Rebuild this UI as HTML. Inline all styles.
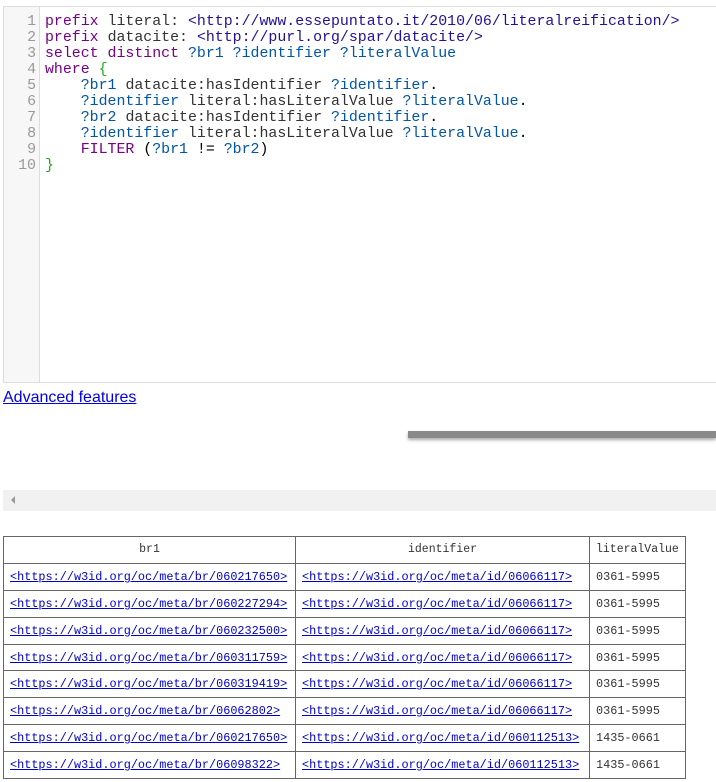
<!DOCTYPE html>
<html><head><style>
body{margin:0;width:716px;height:782px;overflow:hidden;background:#fff;font-family:"Liberation Sans",sans-serif;position:relative}
.ed{position:absolute;left:3px;top:6px;width:713px;height:377px;border:1px solid #ddd;border-right:none;box-sizing:border-box}
.gut{position:absolute;left:0;top:0;width:35px;height:100%;background:#f7f7f7;border-right:1px solid #ddd}
.code{position:absolute;left:0;top:7px;font-family:"Liberation Mono",monospace;font-size:14.9px;line-height:16px;white-space:pre}
.ln{display:inline-block;width:32px;text-align:right;color:#999;margin-right:9px}
.k{color:#708}.v{color:#05a}.u{color:#219}.p{color:#2a2}.o{color:#333}
a.adv{position:absolute;left:3px;top:389px;font-size:16px;color:#00e}
.bar{position:absolute;left:408px;top:431px;width:308px;height:7px;background:#8a8a8a;box-shadow:0 2px 3px #aaa}
.sb{position:absolute;left:3px;top:490px;width:713px;height:21px;background:#f1f1f1}
.sb i{position:absolute;left:8px;top:6px;border:4px solid transparent;border-right:4px solid #999;border-left:0;height:0}
table{position:absolute;left:3px;top:536px;border-collapse:collapse;font-family:"Liberation Mono",monospace;font-size:11.85px}
td,th{border:1px solid #666;height:25.9px;padding:0 6px;white-space:nowrap}
th{font-weight:normal;color:#333;font-size:11.5px}
td{color:#333}td a{color:#00c}
</style></head><body>
<div class="ed"><div class="gut"></div><div class="code"><span class="ln">1</span><span class="k">prefix</span> <span class="o">literal:</span> <span class="u">&lt;http://www.essepuntato.it/2010/06/literalreification/&gt;</span>
<span class="ln">2</span><span class="k">prefix</span> <span class="o">datacite:</span> <span class="u">&lt;http://purl.org/spar/datacite/&gt;</span>
<span class="ln">3</span><span class="k">select distinct</span> <span class="v">?br1 ?identifier ?literalValue</span>
<span class="ln">4</span><span class="k">where</span> <span class="p">{</span>
<span class="ln">5</span>    <span class="v">?br1</span> <span class="o">datacite:hasIdentifier</span> <span class="v">?identifier</span>.
<span class="ln">6</span>    <span class="v">?identifier</span> <span class="o">literal:hasLiteralValue</span> <span class="v">?literalValue</span>.
<span class="ln">7</span>    <span class="v">?br2</span> <span class="o">datacite:hasIdentifier</span> <span class="v">?identifier</span>.
<span class="ln">8</span>    <span class="v">?identifier</span> <span class="o">literal:hasLiteralValue</span> <span class="v">?literalValue</span>.
<span class="ln">9</span>    <span class="k">FILTER</span> (<span class="v">?br1</span> != <span class="v">?br2</span>)
<span class="ln">10</span><span class="p">}</span></div></div>
<a class="adv" href="#">Advanced features</a>
<div class="bar"></div>
<div class="sb"><i></i></div>
<table>
<tr><th style="width:279px">br1</th><th style="width:281px">identifier</th><th>literalValue</th></tr>
<tr><td><a href="#">&lt;https://w3id.org/oc/meta/br/060217650&gt;</a></td><td><a href="#">&lt;https://w3id.org/oc/meta/id/06066117&gt;</a></td><td>0361-5995</td></tr>
<tr><td><a href="#">&lt;https://w3id.org/oc/meta/br/060227294&gt;</a></td><td><a href="#">&lt;https://w3id.org/oc/meta/id/06066117&gt;</a></td><td>0361-5995</td></tr>
<tr><td><a href="#">&lt;https://w3id.org/oc/meta/br/060232500&gt;</a></td><td><a href="#">&lt;https://w3id.org/oc/meta/id/06066117&gt;</a></td><td>0361-5995</td></tr>
<tr><td><a href="#">&lt;https://w3id.org/oc/meta/br/060311759&gt;</a></td><td><a href="#">&lt;https://w3id.org/oc/meta/id/06066117&gt;</a></td><td>0361-5995</td></tr>
<tr><td><a href="#">&lt;https://w3id.org/oc/meta/br/060319419&gt;</a></td><td><a href="#">&lt;https://w3id.org/oc/meta/id/06066117&gt;</a></td><td>0361-5995</td></tr>
<tr><td><a href="#">&lt;https://w3id.org/oc/meta/br/06062802&gt;</a></td><td><a href="#">&lt;https://w3id.org/oc/meta/id/06066117&gt;</a></td><td>0361-5995</td></tr>
<tr><td><a href="#">&lt;https://w3id.org/oc/meta/br/060217650&gt;</a></td><td><a href="#">&lt;https://w3id.org/oc/meta/id/060112513&gt;</a></td><td>1435-0661</td></tr>
<tr><td><a href="#">&lt;https://w3id.org/oc/meta/br/06098322&gt;</a></td><td><a href="#">&lt;https://w3id.org/oc/meta/id/060112513&gt;</a></td><td>1435-0661</td></tr>
</table>
</body></html>
